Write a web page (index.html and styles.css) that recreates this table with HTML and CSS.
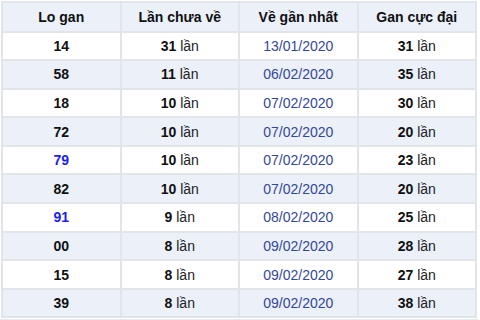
FILE: index.html
```html
<!DOCTYPE html>
<html lang="vi">
<head>
<meta charset="UTF-8" />
<meta name="viewport" content="width=device-width, initial-scale=1" />
<title>Lô gan</title>
<link rel="stylesheet" href="styles.css">
</head>
<body>
<div class="wrap">
<table class="gan">
  <thead>
    <tr><th>Lo gan</th><th>Lần chưa về</th><th>Về gần nhất</th><th>Gan cực đại</th></tr>
  </thead>
  <tbody>
    <tr><td class="num">14</td><td><b>31</b> lần</td><td class="date">13/01/2020</td><td><b>31</b> lần</td></tr>
    <tr><td class="num">58</td><td><b>11</b> lần</td><td class="date">06/02/2020</td><td><b>35</b> lần</td></tr>
    <tr><td class="num">18</td><td><b>10</b> lần</td><td class="date">07/02/2020</td><td><b>30</b> lần</td></tr>
    <tr><td class="num">72</td><td><b>10</b> lần</td><td class="date">07/02/2020</td><td><b>20</b> lần</td></tr>
    <tr><td class="num hot">79</td><td><b>10</b> lần</td><td class="date">07/02/2020</td><td><b>23</b> lần</td></tr>
    <tr><td class="num">82</td><td><b>10</b> lần</td><td class="date">07/02/2020</td><td><b>20</b> lần</td></tr>
    <tr><td class="num hot">91</td><td><b>9</b> lần</td><td class="date">08/02/2020</td><td><b>25</b> lần</td></tr>
    <tr><td class="num">00</td><td><b>8</b> lần</td><td class="date">09/02/2020</td><td><b>28</b> lần</td></tr>
    <tr><td class="num">15</td><td><b>8</b> lần</td><td class="date">09/02/2020</td><td><b>27</b> lần</td></tr>
    <tr><td class="num">39</td><td><b>8</b> lần</td><td class="date">09/02/2020</td><td><b>38</b> lần</td></tr>
  </tbody>
</table>
</div>
</body>
</html>
```

FILE: styles.css
```css
body { margin: 0; background: #fff; font-family: "Liberation Sans", Arial, sans-serif; font-size: 14px; color: #222; }
.wrap { width: 478px; border-bottom: 1px solid #e4e7eb; padding-bottom: 1px; }
.gan { width: 476px; margin-left: 1px; margin-top: 1px; border-collapse: collapse; table-layout: fixed; border: 2px solid #e1e5ea; }
.gan th, .gan td { border: 2px solid #e1e5ea; text-align: center; padding: 0; height: 26.6px; }
.gan th { background: #ebf0f9; font-weight: bold; color: #111; height: 27.5px; }
.gan tbody tr:nth-child(even) td { background: #ebf0f9; }
.num { font-weight: bold; color: #111; }
.num.hot { color: #1c1cf0; }
.date { color: #34479a; }
b { color: #111; }
```
